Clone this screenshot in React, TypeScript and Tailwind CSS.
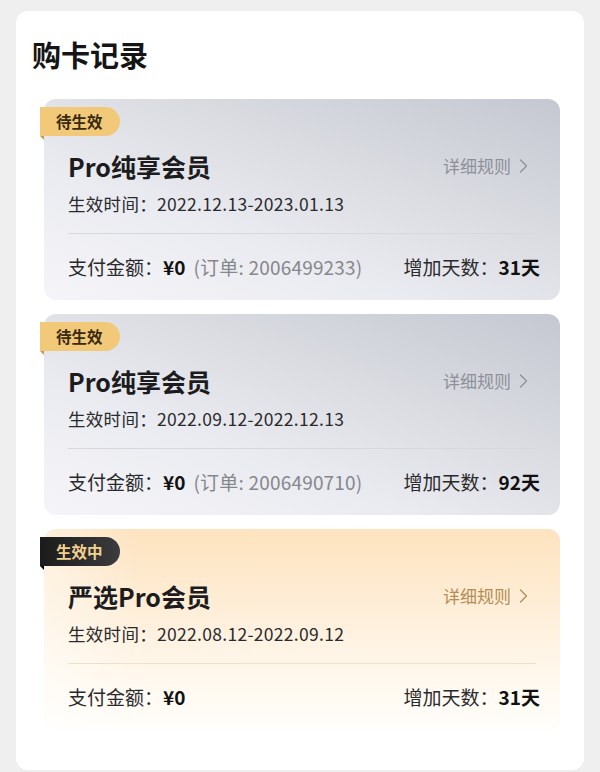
type Record = {
    status: 'pending' | 'active';
    name: string;
    period: string;
    amount: string;
    order?: string;
    days: string;
};

const records: Record[] = [
    { status: 'pending', name: 'Pro纯享会员', period: '2022.12.13-2023.01.13', amount: '¥0', order: '2006499233', days: '31天' },
    { status: 'pending', name: 'Pro纯享会员', period: '2022.09.12-2022.12.13', amount: '¥0', order: '2006490710', days: '92天' },
    { status: 'active', name: '严选Pro会员', period: '2022.08.12-2022.09.12', amount: '¥0', days: '31天' },
];

function Chevron() {
    return (
        <svg width="9" height="14" viewBox="0 0 9 14" fill="none" className="ml-[8px]">
            <path d="M1.5 1 L7.5 7 L1.5 13" stroke="currentColor" strokeWidth="1.3" strokeLinecap="round" strokeLinejoin="round" />
        </svg>
    );
}

function RecordCard({ r }: { r: Record }) {
    const active = r.status === 'active';
    return (
        <div
            className={
                active
                    ? 'relative h-[201px] rounded-[12px] pl-6 pr-5 pt-[51px] bg-[linear-gradient(90deg,rgba(255,255,255,0.45),rgba(255,255,255,0)_18%),linear-gradient(180deg,#fde3bf_0%,#feeed8_40%,#fff8ee_75%,#fffefb_100%)]'
                    : 'relative h-[201px] rounded-[12px] pl-6 pr-5 pt-[51px] bg-[linear-gradient(200deg,#c5c8d1_0%,#d9dbe1_35%,#eaebf0_65%,#f5f5f9_100%)]'
            }
        >
            {/* status tag */}
            <div
                className={
                    active
                        ? 'absolute -left-1 top-2 h-[29px] w-[80px] flex items-center pl-[16px] rounded-tl-[6px] rounded-r-full bg-[linear-gradient(90deg,#1b1b1b,#3b3c3e)] text-[15.5px] font-bold text-[#f3d08f]'
                        : 'absolute -left-1 top-2 h-[29px] w-[80px] flex items-center pl-[16px] rounded-tl-[6px] rounded-r-full bg-[#f1c978] text-[15.5px] font-bold text-[#3a2a10]'
                }
            >
                {active ? '生效中' : '待生效'}
            </div>
            <div
                className={
                    active
                        ? 'absolute -left-1 top-[37px] w-1 h-[4px] bg-[#000] [clip-path:polygon(0_0,100%_0,100%_100%)]'
                        : 'absolute -left-1 top-[37px] w-1 h-[4px] bg-[#c79d4c] [clip-path:polygon(0_0,100%_0,100%_100%)]'
                }
            />

            <div className="flex items-center justify-between h-8">
                <div className="text-[25px] leading-8 font-bold text-[#1c1c1e]">{r.name}</div>
                <div className={active ? 'flex items-center pr-3 text-[17px] text-[#b48c55]' : 'flex items-center pr-3 text-[17px] text-[#8e9099]'}>
                    详细规则
                    <Chevron />
                </div>
            </div>

            <div className="mt-[10px] h-6 leading-6 text-[17.5px] tracking-[0.3px] text-[#2a2a2c]">
                生效时间：{r.period}
            </div>

            <div className={active ? 'mt-[17px] mr-1 h-px bg-[#efe0c8]' : 'mt-[17px] mr-1 h-px bg-[#d6d8de]'} />

            <div className="mt-[21px] flex items-center justify-between h-6 leading-6 text-[19px] text-[#2a2a2c]">
                <div className="flex items-center">
                    支付金额：<span className="font-bold text-[#111]">{r.amount}</span>
                    {r.order && <span className="ml-2 tracking-[0.2px] text-[#86878c]">(订单: {r.order})</span>}
                </div>
                <div className="flex items-center">
                    增加天数：<span className="font-bold text-[#111]">{r.days}</span>
                </div>
            </div>
        </div>
    );
}

export default function App() {
    return (
        <div className="min-h-screen bg-[#efefef] px-4 pt-[11px] font-['Noto_Sans_CJK_SC','Noto_Sans',sans-serif]">
            <div className="bg-white rounded-[12px] pt-[25px] pb-[40px] pl-[28px] pr-[24px]">
                <h2 className="-ml-[12px] text-[29px] leading-9 font-bold text-[#151515] mb-[27px]">购卡记录</h2>
                <div className="flex flex-col gap-[14px]">
                    {records.map((r, i) => (
                        <RecordCard key={i} r={r} />
                    ))}
                </div>
            </div>
        </div>
    );
}
